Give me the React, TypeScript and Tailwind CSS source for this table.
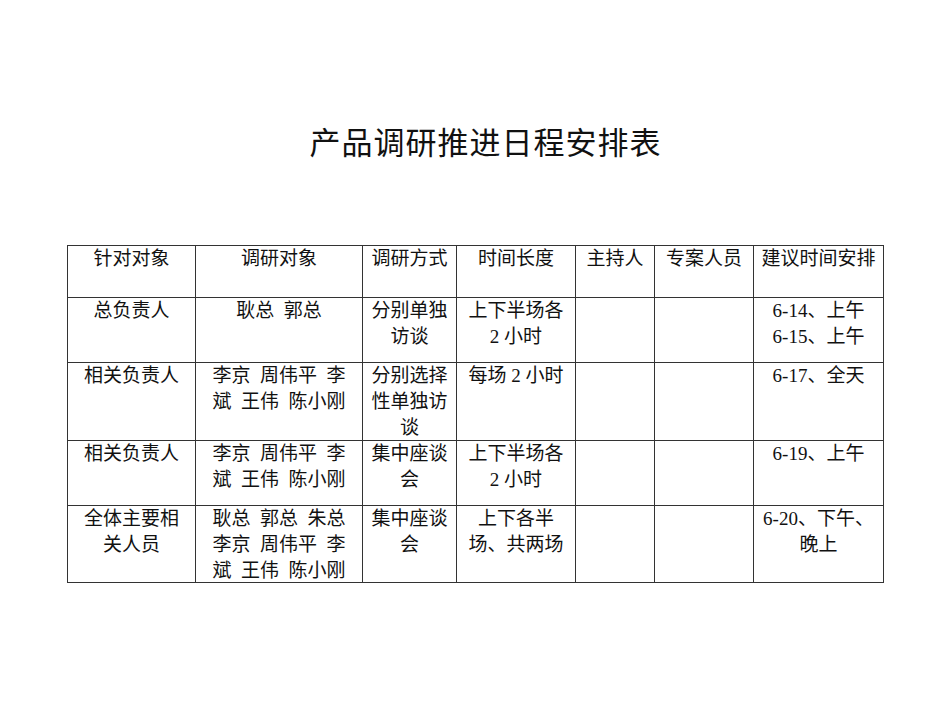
const rows: { cells: string[][] }[] = [
  {
    cells: [
      ["针对对象"],
      ["调研对象"],
      ["调研方式"],
      ["时间长度"],
      ["主持人"],
      ["专案人员"],
      ["建议时间安排"],
    ],
  },
  {
    cells: [
      ["总负责人"],
      ["耿总  郭总"],
      ["分别单独", "访谈"],
      ["上下半场各", "2 小时"],
      [],
      [],
      ["6-14、上午", "6-15、上午"],
    ],
  },
  {
    cells: [
      ["相关负责人"],
      ["李京  周伟平  李", "斌  王伟  陈小刚"],
      ["分别选择", "性单独访", "谈"],
      ["每场 2 小时"],
      [],
      [],
      ["6-17、全天"],
    ],
  },
  {
    cells: [
      ["相关负责人"],
      ["李京  周伟平  李", "斌  王伟  陈小刚"],
      ["集中座谈", "会"],
      ["上下半场各", "2 小时"],
      [],
      [],
      ["6-19、上午"],
    ],
  },
  {
    cells: [
      ["全体主要相", "关人员"],
      ["耿总  郭总  朱总", "李京  周伟平  李", "斌  王伟  陈小刚"],
      ["集中座谈", "会"],
      ["上下各半", "场、共两场"],
      [],
      [],
      ["6-20、下午、", "晚上"],
    ],
  },
];

const App = () => {
  return (
    <div
      className="h-[713px] w-[950px] bg-white pl-[67px] pt-[124px] text-[#111]"
      style={{ fontFamily: "'Liberation Serif', 'Noto Sans CJK SC', serif" }}
    >
      <h1 className="w-[817px] pl-[20px] text-center text-[31px] leading-[40px] tracking-[1px]">
        产品调研推进日程安排表
      </h1>

      <div className="mt-[81px] grid w-[817px] grid-cols-[128px_167px_94px_119px_79px_99px_130px] grid-rows-[52px_65px_78px_65px_77px] border-l border-t border-[#333]">
        {rows.map((row, r) =>
          row.cells.map((lines, c) => (
            <div
              key={`${r}-${c}`}
              className="border-b border-r border-[#333] px-[1px] pt-0 text-center text-[19px] leading-[26px] whitespace-pre"
            >
              {lines.map((line, i) => (
                <div key={i}>{line}</div>
              ))}
            </div>
          )),
        )}
      </div>
    </div>
  );
};

export default App;
